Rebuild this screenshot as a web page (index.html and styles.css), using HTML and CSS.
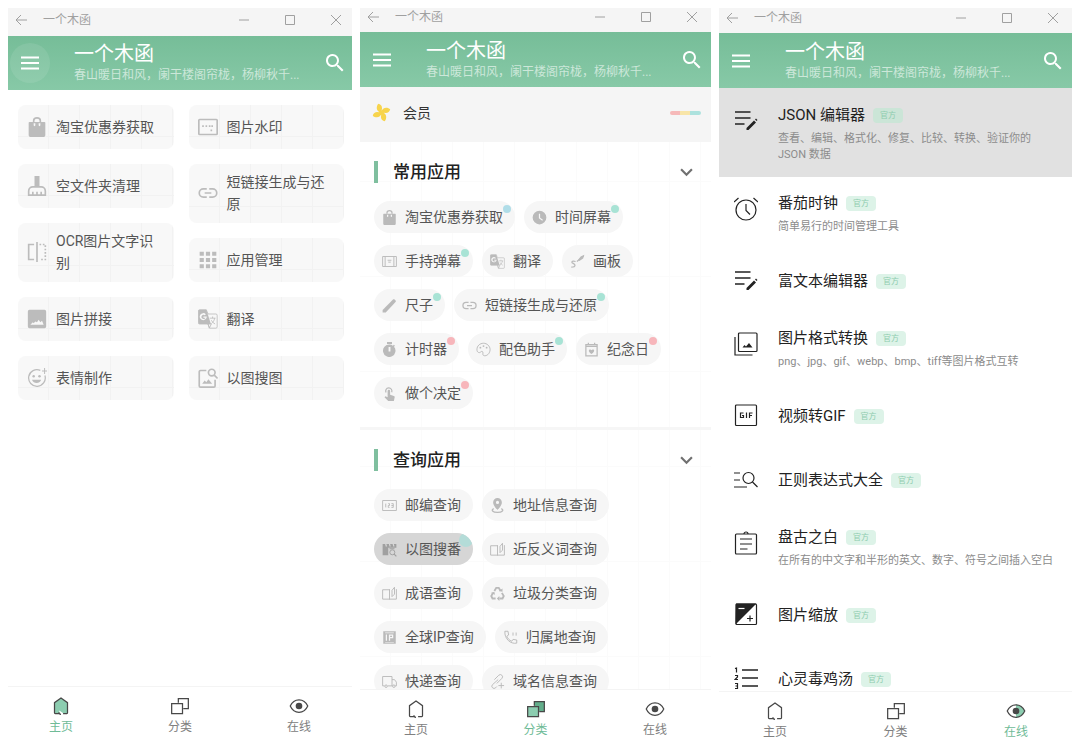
FILE: index.html
```html
<!DOCTYPE html>
<html lang="zh-CN">
<head>
<meta charset="utf-8">
<meta name="viewport" content="width=device-width, initial-scale=1">
<title>一个木函</title>
<link rel="stylesheet" href="styles.css">
</head>
<body>
<svg class="sprite" aria-hidden="true">
  <symbol id="i-back" viewBox="0 0 12 12"><path d="M12 6H1M6 1 1 6l5 5" class="ln"/></symbol>
  <symbol id="i-min" viewBox="0 0 12 12"><path d="M1 6h10" class="ln"/></symbol>
  <symbol id="i-max" viewBox="0 0 12 12"><path d="M1.500 1.500h9v9h-9z" class="ln"/></symbol>
  <symbol id="i-close" viewBox="0 0 12 12"><path d="m1 1 10 10M11 1 1 11" class="ln"/></symbol>
  <symbol id="i-menu" viewBox="0 0 24 24"><path d="M3 6.500h18M3 12h18M3 17.500h18" class="ln w2"/></symbol>
  <symbol id="i-search" viewBox="0 0 24 24"><path d="M15.500 14h-.8l-.3-.3A6.500 6.500 0 1 0 13.700 14.400l.3.3v.8l5 5 1.500-1.500zm-6 0a4.500 4.500 0 1 1 0-9 4.500 4.500 0 0 1 0 9z"/></symbol>
  <symbol id="i-bag" viewBox="0 0 24 24"><path d="M8 6V4.500a4 3.500 0 0 1 8 0V6" class="ln w2"/><path fill-rule="evenodd" d="M3 6h18a1 1 0 0 1 1 1v15a2 2 0 0 1-2 2H4a2 2 0 0 1-2-2V7a1 1 0 0 1 1-1zM8 7.500V10a1 1 0 0 0 2 0V7.500zm6 0V10a1 1 0 0 0 2 0V7.500z"/></symbol>
  <symbol id="i-mark" viewBox="0 0 24 24"><rect x="1" y="3" width="22" height="18" rx="1" class="ln w2"/><path d="M5 10h2v2H5zm4 0h2v2H9zm4 0h2v2h-2zm3 0h2v2h-2zm-1 5h2v2h-2z"/></symbol>
  <symbol id="i-broom" viewBox="0 0 24 24"><path d="M9 0h6v12H9z"/><path d="M2 23V18a5 5 0 0 1 5-5h10a5 5 0 0 1 5 5v5zM7 23v-4m5 4v-4m5 4v-4" class="ln w2"/></symbol>
  <symbol id="i-link" viewBox="0 0 24 24"><path d="M10.500 7H6.500a5 5 0 0 0 0 10h4M13.500 7h4a5 5 0 0 1 0 10h-4M8 12h8" class="ln w2"/></symbol>
  <symbol id="i-ocr" viewBox="0 0 24 24"><path d="M8.500 3H2v18h6.500M12 0v24" class="ln w2"/><path d="M15 3h7v18h-7" class="ln w2" stroke-dasharray="2 2"/></symbol>
  <symbol id="i-grid" viewBox="0 0 24 24"><path d="M2 2h5v5H2zm7.500 0h5v5h-5zM17 2h5v5h-5zM2 9.500h5v5H2zm7.500 0h5v5h-5zm7.500 0h5v5h-5zM2 17h5v5H2zm7.500 0h5v5h-5zm7.500 0h5v5h-5z"/></symbol>
  <symbol id="i-image" viewBox="0 0 24 24"><path fill-rule="evenodd" d="M3 1h18a2 2 0 0 1 2 2v18a2 2 0 0 1-2 2H3a2 2 0 0 1-2-2V3a2 2 0 0 1 2-2zm1 18h16l-2-5-2 2-2-3-2 3-2-1-2 2-1-1z"/></symbol>
  <symbol id="i-trans" viewBox="0 0 24 24"><path d="M2 1h8l2 5h9.500A1.500 1.500 0 0 1 23 7.500v14a1.500 1.500 0 0 1-1.500 1.500H14l-2-5H2a1.500 1.500 0 0 1-1.500-1.500v-14A1.500 1.500 0 0 1 2 1z" class="ln"/><path fill-rule="evenodd" d="M2 1h8l5.500 17H2a1.500 1.500 0 0 1-1.500-1.500v-14A1.500 1.500 0 0 1 2 1zm8.500 8H6.500v1.500H9a2.500 2.500 0 1 1-.8-3l1.200-1.200A4.200 4.200 0 1 0 10.500 9z"/><path d="m12 18 4 0-2.500 5zM14 11h7m-3.500-2v2m2.500 0c-.5 3-2 5-4 6.500m0-4c1 2 2.500 3.500 4.500 4.500" class="ln"/></symbol>
  <symbol id="i-smile" viewBox="0 0 24 24"><path d="M16 2.800A10 10 0 1 0 21.500 9" class="ln w15"/><circle cx="8" cy="10" r="1.500"/><circle cx="15" cy="10" r="1.500"/><path d="M6 14h11c-1 2.500-3 4-5.500 4S7 16.500 6 14zM20.500 0h1.200v3H24v1.200h-2.300v3h-1.200v-3H18V3h2.500z"/></symbol>
  <symbol id="i-imgsearch" viewBox="0 0 24 24"><path d="M10 3H3a1.500 1.500 0 0 0-1.500 1.500v17A1.500 1.500 0 0 0 3 23h16a1.500 1.500 0 0 0 1.500-1.500V14M19.500 8.500l4 4" class="ln w2"/><circle cx="16.500" cy="5.500" r="4" class="ln w2"/><path d="m5 19 3-4 2 2 2.500-3.500L17 19z"/></symbol>
  <symbol id="i-home" viewBox="0 0 24 24"><path d="M4.200 8 12 2.500 19.800 8v12.500h-5.500L10 17.500v3H4.200z" class="tint"/><path d="M9.500 21H5a.8.8 0 0 1-.8-.8V8L12 2.500 19.800 8v12.200a.8.8 0 0 1-.8.800h-4.500M9.500 19.500c0 2 1 2.500 2.500 2.500" class="ln w15"/></symbol>
  <symbol id="i-cat" viewBox="0 0 24 24"><path d="M10 3h12v12h-7V9h-5z" class="tint dark"/><path d="M2 9h13v12H2z" class="tint"/><path d="M2 9h13v12H2zM10 8V3h12v12h-6" class="ln w15"/></symbol>
  <symbol id="i-eye" viewBox="0 0 24 24"><path d="M12 4.500c5 0 8.500 3 10.500 7.500-2 4.500-5.500 7.500-10.500 7.500z" class="tint"/><path d="M1.500 12C3.500 7.500 7.500 4.500 12 4.500s8.500 3 10.500 7.500c-2 4.500-6 7.500-10.500 7.500S3.500 16.500 1.500 12z" class="ln w15"/><circle cx="12" cy="12" r="4"/></symbol>
  <symbol id="i-pin" viewBox="0 0 24 24"><path d="M11 12C5 11 5 4 8 1c5 1 6 6 3 11zM12 11c1-6 8-6 11-3-1 5-6 6-11 3zM13 12c6 1 6 8 3 11-5-1-6-6-3-11zM12 13c-1 6-8 6-11 3 1-5 6-6 11-3z"/><circle cx="12" cy="12" r="3"/></symbol>
  <symbol id="i-down" viewBox="0 0 12 12"><path d="m1 3 5 5 5-5" class="ln w2"/></symbol>
  <symbol id="i-clock" viewBox="0 0 24 24"><path fill-rule="evenodd" d="M12 1a11 11 0 1 1 0 22 11 11 0 0 1 0-22zm-1 5v7l5.500 4 1-1.500-4.500-3V6z"/></symbol>
  <symbol id="i-danmu" viewBox="0 0 24 24"><path d="M1 4h22v16H1zM5 4v16m14-16v16M9 10h6m-5 3h4" class="ln w15"/></symbol>
  <symbol id="i-brush" viewBox="0 0 24 24"><path d="M22 3 11 12M9 12c-3-1-6-1-6 1s5 2 5 5-3 3-6 3" class="ln w2"/><path d="m17 4 6-3-2 6-6 4-2-2z"/></symbol>
  <symbol id="i-ruler" viewBox="0 0 24 24"><path d="m1 19 17-17c2-1 5 2 4 4L6 23H1z"/></symbol>
  <symbol id="i-timer" viewBox="0 0 24 24"><path fill-rule="evenodd" d="M8 0h8v3H8zm4 4c2 0 4 .7 5.500 1.800L19 4.300l1.700 1.700-1.500 1.500A10 10 0 1 1 12 4zm-1.500 4v7h3V8z"/></symbol>
  <symbol id="i-palette" viewBox="0 0 24 24"><path d="M12 2C6 2 1.500 6.500 1.500 12c0 5 4 6 6 4s4-1 3.500 2 1 4 3 4c5 0 8.500-5 8.500-10S18 2 12 2z" class="ln w15"/><circle cx="7" cy="9" r="1.500"/><circle cx="12" cy="6.500" r="1.500"/><circle cx="17" cy="9" r="1.500"/></symbol>
  <symbol id="i-cal" viewBox="0 0 24 24"><path d="M3 4h18v18H3zM3 7h18M7 1v4m10-4v4" class="ln w2"/><path d="M12 19c-5-3-5-6-3-7 1.500-.5 2.500.3 3 1.300.5-1 1.500-1.800 3-1.300 2 1 2 4-3 7z"/></symbol>
  <symbol id="i-touch" viewBox="0 0 24 24"><path d="M9 8a2 2 0 0 1 4 0v6l6 2c1 .5 1.500 1 1.300 2L19 24h-9l-6-6 1.500-1.500L9 18z"/><path d="M6.500 10.500A5 5 0 1 1 15.500 10" class="ln w2"/></symbol>
  <symbol id="i-post" viewBox="0 0 24 24"><path d="M1 4h22v16H1zM6 9v6m4-6h2v3h-2v3h2m3-6h3v6h-3m0-3h3" class="ln w15"/></symbol>
  <symbol id="i-place" viewBox="0 0 24 24"><path fill-rule="evenodd" d="M12 0a7 7 0 0 1 7 7c0 5-7 12-7 12S5 12 5 7a7 7 0 0 1 7-7zm0 4.500a2.500 2.500 0 1 0 0 5 2.500 2.500 0 0 0 0-5z"/><path d="M6 17c-5 2-2 6 6 6s11-4 6-6" class="ln w2"/></symbol>
  <symbol id="i-film" viewBox="0 0 24 24"><path fill-rule="evenodd" d="M1 3h4l1 4h2L7 3h4l1 4h2l-1-4h4l1 4h2l-1-4h4v6H10v12H1zm11 7h8v1.500h-8z"/><circle cx="16.500" cy="16.500" r="4" class="ln w15"/><path d="m19 19 4 4" class="ln w2"/></symbol>
  <symbol id="i-book" viewBox="0 0 24 24"><path d="M12 6H1v15h10.500M12 5v17M12 21h11V5M16 17V7l4-5v11z" class="ln w15"/></symbol>
  <symbol id="i-recycle" viewBox="0 0 24 24"><path d="M7 8l3-5h4l3 5M19 11l3 5-2 4h-5M9 20H4l-2-4 3-5" class="ln w3"/><path d="m14 8 6 1V4zM15 16v8l-4-4zM1 11l6-2 1 5z"/></symbol>
  <symbol id="i-ip" viewBox="0 0 24 24"><path fill-rule="evenodd" d="M2 2h20v20H2zm4 5v10h2V7zm5 0v10h2v-4h5V7zm2 2h3v2h-3zM5 4v1h14V4zm0 15v1h14v-1z"/></symbol>
  <symbol id="i-phone" viewBox="0 0 24 24"><path d="M3 2h5l1 6-3 2c1.500 3.500 4 6.500 8 8l2-3 6 1v5C12 23 2 14 3 2zM16 4v5m5-5v5" class="ln w15"/></symbol>
  <symbol id="i-truck" viewBox="0 0 24 24"><path d="M4 19H1V4h15v15H9M16 9h4l3 4v6h-2m-5 0h1" class="ln w15"/><circle cx="6.500" cy="19.500" r="2" class="ln w15"/><circle cx="19" cy="19.500" r="2" class="ln w15"/></symbol>
  <symbol id="i-domain" viewBox="0 0 24 24"><path d="M11 15l8-8a3.500 3.500 0 0 0-5-5L7 9M13 9l-9 8a3.500 3.500 0 0 0 5 5l2-2M18 14v9m-4.500-4.500h9" class="ln w15"/></symbol>
  <symbol id="i-edit" viewBox="0 0 24 24"><path d="M1 4h15.500M1 10h15.500M1 16h9.500" class="ln w15"/><path d="m12.500 20 7.500-7.500 2 2-7.500 7.500h-2zM21 11.500l1-1 1.500 1.500-1 1z"/></symbol>
  <symbol id="i-alarm" viewBox="0 0 24 24"><circle cx="12" cy="13" r="10" class="ln w12"/><path d="M12 7v6.500l4 4M0 5l4.500-4M24 5l-4.500-4" class="ln w12"/></symbol>
  <symbol id="i-photos" viewBox="0 0 24 24"><rect x="4.500" y="1" width="18.500" height="18.500" rx="1" class="ln w12"/><path d="M1 5v18h17.500" class="ln w12"/><path d="m8.500 15.500 2-2.500 1.500 1.500 3-3.500 3.500 4.500z"/></symbol>
  <symbol id="i-gif" viewBox="0 0 24 24"><rect x="1.500" y="2" width="21" height="20.500" rx="1" class="ln w12"/><path d="M9.500 10H6.500v4.500h3V12.500H8M12.500 9.500v5.500M15.500 15v-5H18.500M15.500 12.500h2.500" class="ln w12"/></symbol>
  <symbol id="i-regex" viewBox="0 0 24 24"><path d="M0 6h6M0 13h6M0 20h13M18.500 15l5 5" class="ln w12"/><circle cx="14.500" cy="11" r="5.500" class="ln w12"/></symbol>
  <symbol id="i-clip" viewBox="0 0 24 24"><rect x="1.500" y="3" width="21" height="20" rx="1" class="ln w12"/><path d="M10 3a2 2 0 0 1 4 0M6 8h12M6 13h12M6 18h7.500" class="ln w12"/></symbol>
  <symbol id="i-scale" viewBox="0 0 24 24"><rect x="2" y="2" width="20.500" height="20.500" rx="1" class="ln w12"/><path d="M2 1.500h20.500L1.500 22.500z"/><path d="M16 13.500v6m-3-3h6" class="ln w12"/><path d="M4.500 6.500h6" class="ln knock"/></symbol>
  <symbol id="i-list" viewBox="0 0 24 24"><path d="M8 4h16M8 12h16M8 20h16" class="ln w15"/><path d="M1 2.500 2.500 2v4.500M1 9.500h2.500v1.500L1 13.500h3M1 17.500h2.500v5H1M1.500 20h2" class="ln w12"/></symbol>
</svg>

<main class="board">
  <section class="phone phone-home">
    <div class="titlebar">
      <button class="win" aria-label="返回"><svg><use href="#i-back"/></svg></button>
      <span class="win-title">一个木函</span>
      <button class="win" aria-label="最小化"><svg><use href="#i-min"/></svg></button>
      <button class="win" aria-label="最大化"><svg><use href="#i-max"/></svg></button>
      <button class="win" aria-label="关闭"><svg><use href="#i-close"/></svg></button>
    </div>
    <header class="appbar">
      <button class="round pressed" aria-label="菜单"><svg><use href="#i-menu"/></svg></button>
      <div class="heading"><h1>一个木函</h1><p>春山暖日和风，阑干楼阁帘栊，杨柳秋千...</p></div>
      <button class="find" aria-label="搜索"><svg><use href="#i-search"/></svg></button>
    </header>
    <div class="content cards">
      <div class="column">
        <button class="card"><svg><use href="#i-bag"/></svg><span>淘宝优惠券获取</span></button>
        <button class="card"><svg><use href="#i-broom"/></svg><span>空文件夹清理</span></button>
        <button class="card"><svg><use href="#i-ocr"/></svg><span>OCR图片文字识别</span></button>
        <button class="card"><svg><use href="#i-image"/></svg><span>图片拼接</span></button>
        <button class="card"><svg><use href="#i-smile"/></svg><span>表情制作</span></button>
      </div>
      <div class="column">
        <button class="card"><svg><use href="#i-mark"/></svg><span>图片水印</span></button>
        <button class="card"><svg><use href="#i-link"/></svg><span>短链接生成与还原</span></button>
        <button class="card"><svg><use href="#i-grid"/></svg><span>应用管理</span></button>
        <button class="card"><svg><use href="#i-trans"/></svg><span>翻译</span></button>
        <button class="card"><svg><use href="#i-imgsearch"/></svg><span>以图搜图</span></button>
      </div>
    </div>
    <nav class="tabs">
      <a class="tab active" href="#home"><svg><use href="#i-home"/></svg>主页</a>
      <a class="tab" href="#category"><svg><use href="#i-cat"/></svg>分类</a>
      <a class="tab" href="#online"><svg><use href="#i-eye"/></svg>在线</a>
    </nav>
  </section>

  <section class="phone phone-category">
    <div class="titlebar">
      <button class="win" aria-label="返回"><svg><use href="#i-back"/></svg></button>
      <span class="win-title">一个木函</span>
      <button class="win" aria-label="最小化"><svg><use href="#i-min"/></svg></button>
      <button class="win" aria-label="最大化"><svg><use href="#i-max"/></svg></button>
      <button class="win" aria-label="关闭"><svg><use href="#i-close"/></svg></button>
    </div>
    <header class="appbar">
      <button class="round" aria-label="菜单"><svg><use href="#i-menu"/></svg></button>
      <div class="heading"><h1>一个木函</h1><p>春山暖日和风，阑干楼阁帘栊，杨柳秋千...</p></div>
      <button class="find" aria-label="搜索"><svg><use href="#i-search"/></svg></button>
    </header>
    <div class="content groups">
      <a class="member" href="#member"><svg><use href="#i-pin"/></svg><span>会员</span><i class="stripe"></i></a>
      <section class="group">
        <div class="group-head"><h2>常用应用</h2><button class="fold" aria-label="收起常用应用"><svg><use href="#i-down"/></svg></button></div>
        <div class="chips">
          <button class="chip"><svg><use href="#i-bag"/></svg>淘宝优惠券获取<i class="dot blue"></i></button>
          <button class="chip"><svg><use href="#i-clock"/></svg>时间屏幕<i class="dot"></i></button>
          <button class="chip"><svg><use href="#i-danmu"/></svg>手持弹幕<i class="dot"></i></button>
          <button class="chip"><svg><use href="#i-trans"/></svg>翻译</button>
          <button class="chip"><svg><use href="#i-brush"/></svg>画板</button>
          <button class="chip"><svg><use href="#i-ruler"/></svg>尺子<i class="dot"></i></button>
          <button class="chip"><svg><use href="#i-link"/></svg>短链接生成与还原<i class="dot"></i></button>
          <button class="chip"><svg><use href="#i-timer"/></svg>计时器<i class="dot pink"></i></button>
          <button class="chip"><svg><use href="#i-palette"/></svg>配色助手<i class="dot"></i></button>
          <button class="chip"><svg><use href="#i-cal"/></svg>纪念日<i class="dot pink"></i></button>
          <button class="chip"><svg><use href="#i-touch"/></svg>做个决定<i class="dot pink"></i></button>
        </div>
      </section>
      <section class="group">
        <div class="group-head"><h2>查询应用</h2><button class="fold" aria-label="收起查询应用"><svg><use href="#i-down"/></svg></button></div>
        <div class="chips">
          <button class="chip"><svg><use href="#i-post"/></svg>邮编查询</button>
          <button class="chip"><svg><use href="#i-place"/></svg>地址信息查询</button>
          <button class="chip held"><svg><use href="#i-film"/></svg>以图搜番<i class="dot"></i></button>
          <button class="chip"><svg><use href="#i-book"/></svg>近反义词查询</button>
          <button class="chip"><svg><use href="#i-book"/></svg>成语查询</button>
          <button class="chip"><svg><use href="#i-recycle"/></svg>垃圾分类查询</button>
          <button class="chip"><svg><use href="#i-ip"/></svg>全球IP查询</button>
          <button class="chip"><svg><use href="#i-phone"/></svg>归属地查询</button>
          <button class="chip"><svg><use href="#i-truck"/></svg>快递查询</button>
          <button class="chip"><svg><use href="#i-domain"/></svg>域名信息查询</button>
        </div>
      </section>
    </div>
    <nav class="tabs">
      <a class="tab" href="#home"><svg><use href="#i-home"/></svg>主页</a>
      <a class="tab active" href="#category"><svg><use href="#i-cat"/></svg>分类</a>
      <a class="tab" href="#online"><svg><use href="#i-eye"/></svg>在线</a>
    </nav>
  </section>

  <section class="phone phone-online">
    <div class="titlebar">
      <button class="win" aria-label="返回"><svg><use href="#i-back"/></svg></button>
      <span class="win-title">一个木函</span>
      <button class="win" aria-label="最小化"><svg><use href="#i-min"/></svg></button>
      <button class="win" aria-label="最大化"><svg><use href="#i-max"/></svg></button>
      <button class="win" aria-label="关闭"><svg><use href="#i-close"/></svg></button>
    </div>
    <header class="appbar">
      <button class="round" aria-label="菜单"><svg><use href="#i-menu"/></svg></button>
      <div class="heading"><h1>一个木函</h1><p>春山暖日和风，阑干楼阁帘栊，杨柳秋千...</p></div>
      <button class="find" aria-label="搜索"><svg><use href="#i-search"/></svg></button>
    </header>
    <div class="content tools">
      <a class="tool held" href="#json"><svg><use href="#i-edit"/></svg><div class="info"><h3>JSON 编辑器<small>官方</small></h3><p>查看、编辑、格式化、修复、比较、转换、验证你的 JSON 数据</p></div></a>
      <a class="tool" href="#pomodoro"><svg><use href="#i-alarm"/></svg><div class="info"><h3>番茄时钟<small>官方</small></h3><p>简单易行的时间管理工具</p></div></a>
      <a class="tool" href="#richtext"><svg><use href="#i-edit"/></svg><div class="info"><h3>富文本编辑器<small>官方</small></h3></div></a>
      <a class="tool" href="#convert"><svg><use href="#i-photos"/></svg><div class="info"><h3>图片格式转换<small>官方</small></h3><p>png、jpg、gif、webp、bmp、tiff等图片格式互转</p></div></a>
      <a class="tool" href="#gif"><svg><use href="#i-gif"/></svg><div class="info"><h3>视频转GIF<small>官方</small></h3></div></a>
      <a class="tool" href="#regex"><svg><use href="#i-regex"/></svg><div class="info"><h3>正则表达式大全<small>官方</small></h3></div></a>
      <a class="tool" href="#pangu"><svg><use href="#i-clip"/></svg><div class="info"><h3>盘古之白<small>官方</small></h3><p>在所有的中文字和半形的英文、数字、符号之间插入空白</p></div></a>
      <a class="tool" href="#resize"><svg><use href="#i-scale"/></svg><div class="info"><h3>图片缩放<small>官方</small></h3></div></a>
      <a class="tool" href="#quotes"><svg><use href="#i-list"/></svg><div class="info"><h3>心灵毒鸡汤<small>官方</small></h3></div></a>
    </div>
    <nav class="tabs">
      <a class="tab" href="#home"><svg><use href="#i-home"/></svg>主页</a>
      <a class="tab" href="#category"><svg><use href="#i-cat"/></svg>分类</a>
      <a class="tab active" href="#online"><svg><use href="#i-eye"/></svg>在线</a>
    </nav>
  </section>
</main>
</body>
</html>
```
FILE: styles.css
```css
* { box-sizing: border-box; margin: 0; padding: 0; }
body { background: #fff; color: #555; font: 14px/22px Roboto, "Noto Sans CJK SC", sans-serif; }
button { border: 0; background: none; font: inherit; color: inherit; cursor: pointer; }
a { color: inherit; text-decoration: none; }
svg { display: block; flex: none; fill: currentColor; }
.sprite { display: none; }

.ln { fill: none; stroke: currentColor; stroke-width: 1px; }
.w12 { stroke-width: 1.2px; }
.w15 { stroke-width: 1.5px; }
.w2 { stroke-width: 2px; }
.w3 { stroke-width: 3px; }
.knock { stroke: #fff; stroke-width: 1.2px; }
.tint { fill: var(--tint, none); }
.dark { fill: var(--tint-dark, none); }

.board { display: grid; grid-template-columns: 344fr 351fr 353fr; gap: 8px; height: 100vh; padding: 8px 8px 0; }
.phone { --bar: 24px; --head: 55px; --tabs: 59px; --tab-inset: 36px; --edge: 13px; display: flex; flex-direction: column; min-width: 0; min-height: 0; }
.phone-home { --bar: 28px; --head: 54px; --tabs: 62px; --tab-inset: 33px; --edge: 10px; }
.phone-online { --bar: 25px; --tabs: 57px; }

.titlebar { display: flex; align-items: center; gap: 34px; flex: none; height: var(--bar); padding: 0 var(--edge) 4px 7px; background: #f5f5f5; color: #a0a0a0; }
.phone-category .titlebar, .phone-online .titlebar { padding-bottom: 6px; }
.win, .win svg { width: 12px; height: 12px; }
.win-title { flex: 1; margin-left: -18px; font-size: 12px; line-height: 16px; }

.appbar { display: flex; align-items: center; flex: none; height: var(--head); padding: 0 2px 0 2px; background: linear-gradient(#76bd98, #87c9a7); color: #fff; }
.phone-home .appbar { padding-right: 0; }
.round { display: grid; place-items: center; width: 40px; height: 40px; border-radius: 50%; }
.pressed { background: rgba(255, 255, 255, .09); }
.round svg, .find svg { width: 24px; height: 24px; }
.heading { flex: 1; min-width: 0; padding-left: 24px; }
.heading h1 { font-size: 20px; line-height: 24px; font-weight: 400; }
.heading p { font-size: 12px; line-height: 18px; color: rgba(255, 255, 255, .6); white-space: nowrap; overflow: hidden; text-overflow: ellipsis; }
.find { display: grid; place-items: center; width: 34px; height: 40px; }

.content { flex: 1; min-height: 0; overflow: hidden; }

.cards { display: grid; grid-template-columns: 1fr 1fr; align-content: start; gap: 15px; padding: 15px 8px 0 10px; }
.column { display: flex; flex-direction: column; gap: 15px; }
.card { display: flex; align-items: center; gap: 9px; min-height: 44px; padding: 7px 9px 8px; border-radius: 8px; text-align: left;
  background: linear-gradient(#f2f2f2, #f2f2f2) 0 72% / 100% 1px no-repeat, repeating-linear-gradient(90deg, transparent 0 30px, #f2f2f2 30px 31px), #f8f8f8; }
.card svg { width: 20px; height: 20px; color: #bcbcbc; }

.tabs { display: flex; justify-content: space-between; flex: none; height: var(--tabs); padding: 9px var(--tab-inset) 0; border-top: 1px solid #f4f4f4; }
.tab { display: flex; flex-direction: column; align-items: center; gap: 2px; width: 40px; font-size: 12px; line-height: 18px; color: #808080; }
.tab svg { width: 20px; height: 20px; color: #484848; }
.active { --tint: #8ccdb0; --tint-dark: #62ae8b; color: #6fbb97; }

.groups { background: repeating-linear-gradient(90deg, transparent 0 30px, #fbfbfb 30px 31px), repeating-linear-gradient(transparent 0 94px, #fbfbfb 94px 95px); }
.member { display: flex; align-items: center; gap: 12px; height: 55px; padding: 0 10px 4px 12px; background: #f5f5f5; color: #333; }
.member svg { width: 19px; height: 19px; color: #f7d44c; }
.member span { flex: 1; }
.stripe { width: 31px; height: 4px; border-radius: 2px; background: linear-gradient(90deg, #f6b9b9 33%, #f8e5a8 33% 66%, #ade2de 66%); }
.group { padding: 19px 14px 18px; border-bottom: 3px solid #f6f6f6; }
.group-head { display: flex; align-items: center; justify-content: space-between; padding-right: 4px; border-left: 4px solid #7fbf9f; }
.group-head h2 { padding-left: 15px; font-size: 17px; line-height: 22px; font-weight: 500; color: #222; }
.fold svg { width: 13px; height: 13px; color: #707070; }
.chips { display: flex; flex-wrap: wrap; gap: 12px 9px; margin-top: 18px; }
.chip { position: relative; display: flex; align-items: center; gap: 8px; height: 32px; padding: 0 12px 0 8px; border-radius: 16px; overflow: hidden; background: #f6f6f6; white-space: nowrap; }
.chip svg { width: 15px; height: 15px; color: #bababa; }
.dot { position: absolute; top: 4px; right: 4px; width: 8px; height: 8px; border-radius: 50%; background: #a8e3d5; }
.blue { background: #b0dde8; }
.pink { background: #f7b6bb; }
.chip.held { background: #d6d6d6; }
.chip.held svg { color: #a0a0a0; }
.chip.held .dot { top: 0; right: 0; width: 14px; height: 14px; background: #b4dcd8; }

.tool { display: flex; align-items: flex-start; gap: 20px; padding: 0 14px 0 15px; color: #222; }
.tool svg { width: 24px; height: 24px; margin-top: 20px; }
.tool.held { background: #e1e1e1; }
.tool.held .info { padding: 16px 0 14px; }
.info { display: flex; flex-direction: column; justify-content: center; gap: 5px; flex: 1; min-width: 0; min-height: 64px; padding: 15px 0 13px; }
.info h3 { display: flex; align-items: center; gap: 8px; font-size: 15px; line-height: 22px; font-weight: 400; }
.info small { width: 30px; border-radius: 4px; background: #ddf3e8; color: #8dccae; font-size: 8px; line-height: 15px; text-align: center; }
.held small { background: #cbe5d7; }
.info p { font-size: 11px; line-height: 16px; color: #8c8c8c; }
```
